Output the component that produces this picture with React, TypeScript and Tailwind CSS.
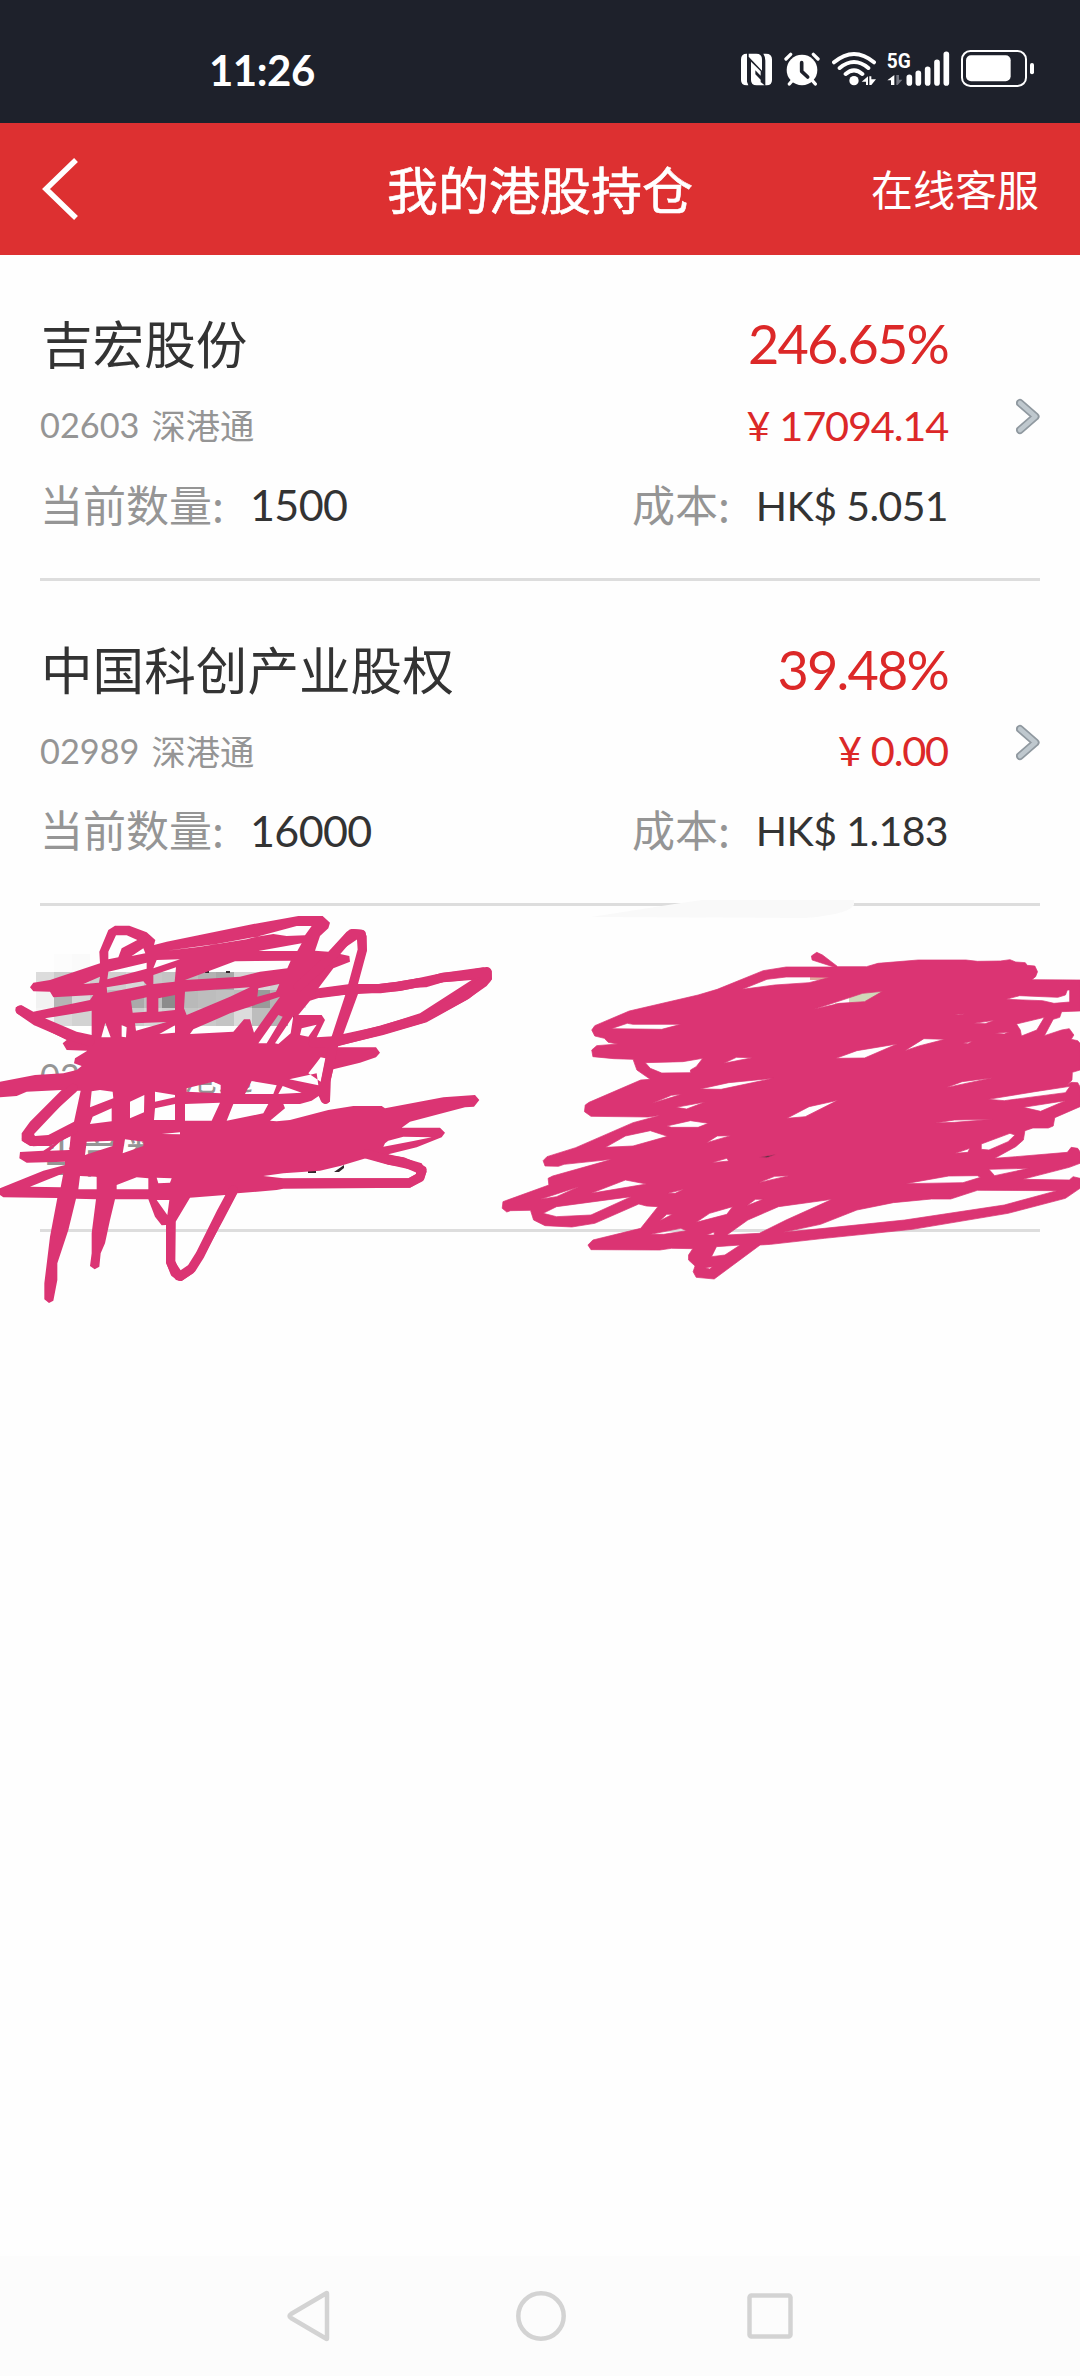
interface Holding {
  name: string;
  code: string;
  market: string;
  rate: string;
  profit: string;
  quantity: string;
  cost: string;
}

const holdings: Holding[] = [
  {
    name: '吉宏股份',
    code: '02603',
    market: '深港通',
    rate: '246.65%',
    profit: '17094.14',
    quantity: '1500',
    cost: '5.051',
  },
  {
    name: '中国科创产业股权',
    code: '02989',
    market: '深港通',
    rate: '39.48%',
    profit: '0.00',
    quantity: '16000',
    cost: '1.183',
  },
];

// x, y, colour of each 18px mosaic block
const mosaic: [number, number, string][] = [
  [54, 954, '#fcfcfc'], [72, 954, '#fafafa'],
  [36, 972, '#dcdcdc'], [54, 972, '#cccccc'], [72, 972, '#dedede'], [90, 972, '#cfcfcf'], [108, 972, '#d0d0d0'], [126, 972, '#d8d8d8'], [144, 972, '#c8c8c8'], [162, 972, '#c4c4c4'], [180, 972, '#bdbdbd'], [198, 972, '#b2b2b2'], [216, 972, '#a8a8a8'], [234, 972, '#d5d5d5'], [252, 972, '#d9d9d9'], [270, 972, '#d0d0d0'],
  [36, 990, '#f2f2f2'], [54, 990, '#b5b5b5'], [72, 990, '#d9d9d9'], [90, 990, '#c6c6c6'], [108, 990, '#bbbbbb'], [126, 990, '#aaaaaa'], [144, 990, '#bfbfbf'], [162, 990, '#8c8c8c'], [180, 990, '#b9b9b9'], [198, 990, '#bdbdbd'], [216, 990, '#c0c0c0'], [234, 990, '#bcbcbc'], [252, 990, '#9a9a9a'], [270, 990, '#b5b5b5'], [288, 990, '#e6e6e6'],
  [36, 1008, '#f5f5f5'], [54, 1008, '#dadada'], [72, 1008, '#d2d2d2'], [90, 1008, '#d5d5d5'], [108, 1008, '#dedede'], [126, 1008, '#cccccc'], [144, 1008, '#d6d6d6'], [162, 1008, '#cfcfcf'], [180, 1008, '#c5c5c5'], [198, 1008, '#cacaca'], [216, 1008, '#c4c4c4'], [234, 1008, '#dcdcdc'], [252, 1008, '#bdbdbd'], [270, 1008, '#b5b5b5'],
];

const leftScribble = [
  'M90 262L100 248L150 240L300 190L298 155L325 90L345 77L388 77L440 97L466 120L462 135L500 125L760 72L895 48L968 48L990 68L985 85L960 108L945 152L985 155L1040 95L1060 87L1090 90L1100 108L1100 150L1070 252L1135 252L1185 246L1245 236L1330 218L1450 202L1475 212L1476 238L1460 258L1400 300L1280 367L1150 405L1012 438L1010 442L1128 442L1140 458L1128 472L1080 488L1000 508L992 540L990 605L975 612L963 603L956 588L935 602L900 612L850 612L855 625L810 662L830 664L870 660L985 630L1060 618L1145 618L1155 625L1330 592L1425 585L1438 600L1422 620L1395 622L1230 665L1205 683L1320 683L1335 698L1325 712L1250 742L1165 763L1200 770L1265 790L1280 815L1270 840L1230 863L850 866L830 870L712 880L670 960L610 1070L580 1120L545 1143L528 1140L512 1120L498 1088L498 975L485 976L465 950L445 898L345 898L330 960L315 1030L302 1060L298 1100L284 1108L270 1098L275 1060L275 1000L288 898L228 896L205 990L172 1090L172 1140L160 1202L147 1209L133 1198L133 1150L150 1010L172 894L10 892L0 885L0 865L130 812L195 795L195 785L80 788L58 775L60 756L130 752L165 730L150 738L90 738L65 722L65 700L90 665L185 570L80 575L50 588L0 592L0 545L105 525L190 520L230 510L245 498L222 490L225 475L262 452L200 450L188 430L200 420L110 375L50 340L47 322L65 316L100 335L270 300L280 285L160 292L150 275L100 274Z',
  'M1072 118L1010 160L1048 168L1050 185L1000 205L955 265L1050 252L1085 145Z',
  'M930 302L965 291L1052 282L1012 408L950 412L975 360L965 345L895 345Z',
  'M1074 282L1200 273L1330 247L1415 240L1260 340L1140 378L1030 402Z',
  'M135 355L275 332L275 405L230 395Z',
  'M380 106L348 106L325 155L325 178L355 172L365 145L412 120Z',
  'M500 152L600 140L740 118L890 78L935 78L915 106L860 108L820 102L770 110L650 132Z',
  'M775 153L905 130L892 153Z',
  'M395 168L430 145L436 160Z',
  'M460 205L470 180L540 178Z',
  'M325 215L440 188L440 206L322 238Z',
  'M250 252L300 230L297 248Z',
  'M555 240L705 184L872 182L862 205L780 215L720 230Z',
  'M460 252L460 225L528 202L524 245Z',
  'M320 262L430 244L440 255L322 278Z',
  'M393 302L440 292L440 335L398 338Z',
  'M475 295L525 285L525 330L475 335Z',
  'M555 275L750 262L690 290L560 345L552 325Z',
  'M772 290L775 265L838 252L828 275Z',
  'M580 388L690 340L840 290L800 345L762 398L750 358L732 358L700 395L570 402Z',
  'M405 370L500 366L408 392Z',
  'M478 402L525 376L525 398Z',
  'M365 375L380 382L378 412L365 410Z',
  'M304 412L316 368L332 412Z',
  'M775 430L835 345L848 350L800 430Z',
  'M825 430L880 348L872 400L835 432Z',
  'M905 385L950 374L925 410L900 405Z',
  'M952 485L962 472L976 475L962 545L925 520Z',
  'M868 538L950 520L955 556Z',
  'M755 543L830 556L820 582L735 582Z',
  'M560 565L640 545L662 555L662 580L560 575Z',
  'M848 558L905 578L835 582Z',
  'M300 570L338 575L340 595L270 622L275 574Z',
  'M390 605L433 585L432 637L390 655Z',
  'M465 575L525 585L525 592L465 605Z',
  'M465 625L525 612L525 660L462 660Z',
  'M555 612L660 608L635 662L555 662Z',
  'M700 612L805 612L790 640L680 662Z',
  'M335 625L278 650L270 672L335 664Z',
  'M228 572L242 572L222 665L145 705L105 708L100 698Z',
  'M260 725L340 722L338 738L255 765Z',
  'M375 718L430 725L430 738L368 760Z',
  'M485 702L540 697L540 703Z',
  'M180 725L212 708L208 750L150 752Z',
  'M90 860L190 820L182 862Z',
  'M240 828L290 830L290 868L235 868Z',
  'M350 855L410 832L445 835L445 868L350 868Z',
  'M470 833L515 835L510 848L475 850Z',
  'M470 900L508 900L502 945Z',
  'M527 965L570 893L685 884L610 1040L575 1100L545 1115L525 1085Z',
  'M790 828L850 820L960 812L1020 798L1100 774L1170 795L1248 812L1248 822L1225 835L850 835Z',
  'M1155 730L1165 722L1210 710L1295 712L1240 723L1150 740Z',
].join('');

// single loops of the marker, kept at full pen width
const leftLoops = [
  'M895 260L1000 165L1055 101L1084 103L1087 150L1052 280L998 445L977 545L976 598',
  'M512 960L512 1085L525 1118L540 1129L575 1105L600 1065L665 935L700 870',
  'M1100 762L1165 780L1210 786L1266 810L1260 832L1228 849L980 849L850 850',
  'M220 565L170 610L85 700L80 715L100 725L145 722L220 690',
  'M960 280L1070 266L1140 266L1195 259L1250 249L1275 248L1330 232L1380 228L1461 215L1461 235L1400 284L1270 354L1145 390L1010 425L940 430',
  'M60 330L110 364L205 405L270 425',
].join('');

const rightScribble = [
  'M868 240L866 228L880 217L895 225L935 260L1010 260L1040 250L1145 240L1270 240L1300 244L1360 243L1385 239L1400 246L1425 248L1430 256L1450 258L1457 275L1452 290L1442 299L1568 300L1568 393L1520 395L1515 412L1498 418L1475 467L1520 450L1540 446L1552 465L1545 478L1562 482L1568 490L1568 570L1548 577L1547 600L1535 615L1545 607L1562 608L1568 620L1568 680L1502 713L1498 738L1485 744L1445 744L1424 752L1420 780L1400 800L1345 835L1400 830L1535 817L1545 802L1562 805L1568 815L1568 850L1540 862L1418 898L1540 900L1550 890L1568 895L1568 925L1530 955L1380 1000L1130 1048L900 1075L760 1093L732 1095L612 1197L565 1192L557 1175L562 1158L545 1140L545 1125L556 1106L500 1105L470 1110L290 1109L282 1095L295 1080L420 1045L465 980L435 978L415 972L300 1030L240 1041L170 1037L140 1020L132 991L80 992L70 996L58 985L60 965L180 915L178 895L190 888L345 838L220 853L205 859L170 858L165 842L175 830L250 803L400 728L472 706L440 711L290 709L273 695L275 675L285 667L420 600L445 598L410 570L400 538L350 536L295 530L292 510L305 497L360 492L335 487L325 475L300 468L292 450L300 437L390 393L570 345L620 328L740 272L800 261L925 261Z',
  'M685 328L750 298L800 291L865 291L915 292L860 308L770 315Z',
  'M873 388L1000 340L1052 334L1005 365L940 370Z',
  'M343 446L385 430L400 433L525 433L475 448Z',
  'M432 548L530 545L582 535L565 560L550 570L550 578L475 579L445 565Z',
  'M637 550L670 532L712 533Z',
  'M930 535L985 512L1090 492L1005 534Z',
  'M1110 512L1160 476L1215 478L1150 497Z',
  'M1290 430L1345 421L1320 431Z',
  'M1240 404L1268 401L1250 405Z',
  'M1345 460L1382 456L1370 462Z',
  'M1262 490L1287 484L1275 491Z',
  'M1402 432L1475 412L1455 450L1415 468L1412 450Z',
  'M1375 358L1410 347L1510 352L1530 345L1535 330L1541 330L1541 366L1500 370L1470 362Z',
  'M575 627L650 608L766 595L630 628Z',
  'M450 670L500 646L527 643Z',
  'M512 682L588 666L540 687Z',
  'M802 715L860 680L935 661L850 710Z',
  'M1220 622L1260 605L1340 593L1230 620Z',
  'M1328 658L1450 635L1542 619L1530 638L1370 662Z',
  'M1420 682L1530 662L1465 694Z',
  'M1190 729L1240 720L1340 718L1240 727Z',
  'M488 738L550 722L597 730L570 742L500 742Z',
  'M328 802L380 768L445 752L490 769L400 798Z',
  'M592 788L620 768L655 767Z',
  'M605 848L645 835L650 843Z',
  'M730 832L775 823L750 833Z',
  'M1310 792L1385 760L1398 765L1380 785L1330 810L1310 808Z',
  'M1242 820L1280 805L1275 817Z',
  'M1330 868L1435 865L1345 887Z',
  'M1112 911L1225 888L1300 887L1308 892L1262 908Z',
  'M290 940L380 900L435 912Z',
  'M158 958L258 920L200 950Z',
  'M165 1000L200 980L395 950L290 1005L200 1010Z',
  'M490 940L533 928L510 940Z',
  'M728 908L770 889L808 887Z',
  'M697 977L720 958L740 958Z',
  'M565 1027L600 1000L660 980L645 1003Z',
  'M470 1022L488 1003L503 1003Z',
  'M445 1063L525 1045L540 1052L480 1063Z',
  'M592 1065L612 1056L612 1065Z',
  'M645 1065L700 1020L780 980L920 958L800 1020L730 1060Z',
  'M605 1130L618 1100L680 1095L640 1125Z',
  'M588 1163L608 1160L600 1167Z',
  'M792 1057L890 1033L985 990L1080 968L1180 957L1230 957L1300 931L1508 932L1370 975L1110 1020L900 1045Z',
].join('');

const StatusBar = () => (
  <div className="h-[123px] bg-[#1e212b] flex items-start justify-between pl-[209px] pr-[46px] pt-[50px] text-white">
    <span className="-mt-px font-['Lato'] font-bold text-[42px] leading-[42px] tracking-[-0.5px]">11:26</span>
    <div className="flex items-start">
      {/* NFC */}
      <svg className="w-[31px] h-[37px] mr-[12px]" viewBox="117 60 93 111" fill="none">
        <path d="M134 71Q117 71 117 88V150Q117 166 134 166H139L135 155V71Z" fill="#fff" />
        <path d="M140 71H163Q180 71 180 88V122L140 80Z" fill="#fff" />
        <path d="M184 71H192Q210 71 210 88V150Q210 166 194 166H190V92Q190 80 184 71Z" fill="#fff" />
        <path d="M147 95L176 124V137L160 121V133L176 149V158L160 143L188 166H164Q147 166 147 150Z" fill="#fff" />
      </svg>
      {/* alarm */}
      <svg className="w-[36px] h-[37px] mr-[12px]" viewBox="246 60 108 111" fill="none">
        <circle cx="300" cy="120" r="46" fill="#fff" />
        <path d="M252 87L266 73M334 73L348 87M262 162L274 148M340 162L328 148" stroke="#fff" strokeWidth="10" strokeLinecap="round" />
        <path d="M299 98V124L317 141" stroke="#1e212b" strokeWidth="11" strokeLinecap="round" strokeLinejoin="round" />
      </svg>
      {/* wifi */}
      <svg className="w-[44px] h-[37px] mr-[11px]" viewBox="390 60 132 111" fill="none">
        <path d="M396 97Q456 47 516 97M413 114Q456 78 499 114M431 132Q456 110 481 132" stroke="#fff" strokeWidth="12" strokeLinecap="round" />
        <circle cx="456" cy="152" r="14" fill="#fff" />
        <path d="M498 139V165H492V155H479ZM502 139H508V148H522L508 165H502Z" fill="#fff" />
      </svg>
      {/* signal */}
      <svg className="w-[63px] h-[37px] mr-[11px]" viewBox="557 60 189 111" fill="none">
        <text x="556" y="113" fill="#fff" fontFamily="Roboto" fontSize="63" fontWeight="700" textLength="72" lengthAdjust="spacingAndGlyphs">5G</text>
        <path d="M579 135V165H569V151H558Z" fill="#fff" />
        <path d="M585 135H593V149H603L589 165H585Z" fill="#747680" />
        <path d="M624 142V159M651 130V159M679 118V159M707 97V159M735 73V159" stroke="#fff" strokeWidth="17" strokeLinecap="round" />
      </svg>
      {/* battery */}
      <svg className="w-[73px] h-[37px]" viewBox="780 60 219 111" fill="none">
        <rect x="783" y="63" width="192" height="105" rx="25" stroke="#fff" strokeWidth="6" />
        <rect x="795" y="76" width="134" height="78" rx="15" fill="#fff" />
        <rect x="987" y="99" width="12" height="34" rx="6" fill="#fff" />
      </svg>
    </div>
  </div>
);

const Header = () => (
  <header className="relative h-[132px] bg-[#dd3031] flex items-center justify-between pl-[42px] pr-[41px] pb-[3px] text-white">
    <svg className="mt-[3px] w-[37px] h-[62px]" viewBox="0 0 37 62" fill="none">
      <path d="M34 2L4 31L34 60" stroke="#fff" strokeWidth="5.5" />
    </svg>
    <h1 className="absolute inset-x-0 text-center text-[51px] leading-[60px] font-normal [-webkit-text-stroke:0.6px_white]">我的港股持仓</h1>
    <span className="relative text-[42px] leading-[60px]">在线客服</span>
  </header>
);

const HoldingRow = ({ item }: { item: Holding }) => (
  <div className="h-[325.5px] mx-10 border-b-3 border-[#dddddd] flex">
    <div className="w-[592px] pt-[57px]">
      <div className="h-[60px] flex items-center pl-px text-[51.6px] text-[#333333] whitespace-nowrap">{item.name}</div>
      <div className="mt-[23px] h-[60px] flex items-center gap-[12px] text-[34.3px] text-[#959595]">
        <span className="font-['Lato']">{item.code}</span>
        <span>{item.market}</span>
      </div>
      <div className="mt-[18px] h-[60px] flex items-center text-[43px] text-[#959595]">
        <span className="w-[210px]">当前数量:</span>
        <span className="pt-[5px] font-['Lato'] tracking-[-0.6px] text-[#333333]">{item.quantity}</span>
      </div>
    </div>
    <div className="w-[316px] pt-[57px]">
      <div className="h-[60px] pt-[3px] flex items-center justify-end font-['Lato'] text-[54px] tracking-[-1.8px] text-[#dc2828]">{item.rate}</div>
      <div className="mt-[23px] h-[60px] flex items-center justify-end gap-[10px] font-['Lato'] text-[41.5px] tracking-[-1.2px] text-[#dc2828]">
        <span>¥</span>
        <span>{item.profit}</span>
      </div>
      <div className="mt-[18px] h-[60px] flex items-center text-[43px] text-[#959595]">
        <span className="w-[124px]">成本:</span>
        <span className="pt-[5px] font-['Lato'] text-[41px] tracking-[-0.6px] text-[#333333] whitespace-nowrap">HK$ {item.cost}</span>
      </div>
    </div>
    <div className="flex-1 flex justify-end pt-[143px]">
      <svg className="w-[24px] h-[37px]" viewBox="0 0 24 37" fill="none">
        <path d="M4 5L19.500 18.500L4 32" stroke="#9099a0" strokeWidth="8" strokeLinecap="round" strokeLinejoin="round" />
        <path d="M4 5L19.500 18.500L4 32" stroke="#bfc8ce" strokeWidth="4.500" strokeLinecap="round" strokeLinejoin="round" />
      </svg>
    </div>
  </div>
);

// The last holding is hidden by its owner, only fragments stay visible
const HiddenRow = () => (
  <div className="h-[325.5px] mx-10 border-b-3 border-[#dddddd] pt-[140px]">
    <div className="h-[60px] flex items-center text-[34.3px] text-[#959595]">
      <span className="w-[110px] font-['Lato']">02</span>
      <span>深港通</span>
    </div>
    <div className="mt-[18px] h-[60px] flex items-center text-[43px] text-[#959595]">当前数量:</div>
  </div>
);

const Scribbles = () => (
  <>
    <svg className="absolute left-0 top-0 w-[1080px] h-[1320px] pointer-events-none" viewBox="0 0 1080 1320">
      <path d="M591 917L681 903L702 900H854V905Q850 911 835 914Q820 917 805 918Z" fill="#f9f9f9" />
      {mosaic.map(([x, y, color]) => (
        <rect key={`${x}-${y}`} x={x} y={y} width="18" height="18" fill={color} />
      ))}
      <path d="M205 971h4v2h-4zM226 971h4v2h-4zM293 1015h4v3h-4zM308 1171h8v2h-8zM334 1172l10 -7v3l-5 4z" fill="#33262c" />
      <path d="M810 976h24v4h-24z" fill="#dfa99d" />
      <path d="M835 1003h14v8h-14z" fill="#d9ccb5" />
      <path d="M849 990h40v17h-40z" fill="#d0d8b9" />
      <path d="M755 1153h26v8h-26z" fill="#333" />
    </svg>
    <svg className="absolute left-0 top-[900px] w-[500px] h-[420px] pointer-events-none" viewBox="0 0 1500 1260" fill="none">
      <path d={leftScribble} fill="#db3473" fillRule="evenodd" />
      <path d={leftLoops} stroke="#db3473" strokeWidth="28" strokeLinecap="round" strokeLinejoin="round" />
    </svg>
    <svg className="absolute left-[480px] top-[880px] w-[600px] h-[420px] pointer-events-none" viewBox="0 0 1568 1260" preserveAspectRatio="none">
      <path d={rightScribble} fill="#db3473" fillRule="evenodd" stroke="#db3473" strokeWidth="2" strokeLinejoin="round" />
    </svg>
  </>
);

const NavBar = () => (
  <nav className="h-[120px] bg-[#fcfcfc] flex items-center justify-between pl-[286px] pr-[285px]">
    <svg className="w-[46px] h-[52px]" viewBox="0 0 46 52" fill="none">
      <path d="M41 4V48Q41 50 39 48L5 28Q2 26 5 24L39 4Q41 2 41 4Z" stroke="#d3d3d3" strokeWidth="4.5" strokeLinejoin="round" />
    </svg>
    <svg className="w-[52px] h-[52px]" viewBox="0 0 52 52" fill="none">
      <circle cx="27" cy="26" r="22.700" stroke="#d3d3d3" strokeWidth="4.5" />
    </svg>
    <svg className="w-[48px] h-[52px]" viewBox="0 0 48 52" fill="none">
      <rect x="2.500" y="5.500" width="41" height="41" rx="2" stroke="#d3d3d3" strokeWidth="4.5" />
    </svg>
  </nav>
);

const App = () => {
  return (
    <div className="relative w-[1080px] h-[2376px] bg-[#fefefe] flex flex-col overflow-hidden font-['Noto_Sans_CJK_SC',sans-serif]">
      <StatusBar />
      <Header />
      <main className="flex-1">
        {holdings.map((item) => (
          <HoldingRow key={item.code} item={item} />
        ))}
        <HiddenRow />
      </main>
      <NavBar />
      <Scribbles />
    </div>
  );
};

export default App;
